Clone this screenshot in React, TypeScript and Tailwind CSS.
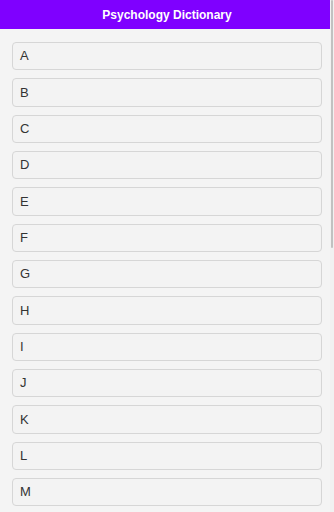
const letters = 'ABCDEFGHIJKLMNOPQRSTUVWXYZ'.split('')

export default function App() {
    return (
        <div className="relative h-[512px] w-[334px] bg-[#f4f4f4] [font-family:'Liberation_Sans',Arial,sans-serif]">
            <div className="h-full w-[330px] overflow-y-auto [scrollbar-width:none]">
                <header className="sticky top-0 z-10 flex h-[29px] items-center justify-center bg-[#7f00ff] pl-[4px] text-[12px] font-bold text-white">
                    Psychology Dictionary
                </header>

                <ul className="flex flex-col gap-[8px] pt-[13px] pb-[86px]">
                    {letters.map((letter) => (
                        <li
                            key={letter}
                            className="ml-3 flex h-[28.33px] w-[310px] items-center rounded-[4px] border border-[#d6d6d6] bg-[#f3f3f3] px-[7px] text-[13px] text-[#333]"
                        >
                            {letter}
                        </li>
                    ))}
                </ul>
            </div>

            {/* scrollbar track + thumb */}
            <div className="absolute top-0 right-0 h-full w-[4px] bg-[#f1f1f1]" aria-hidden="true">
                <div className="mx-auto h-[248px] w-[2px] rounded-full bg-[#c1c1c1]" />
            </div>
        </div>
    )
}
